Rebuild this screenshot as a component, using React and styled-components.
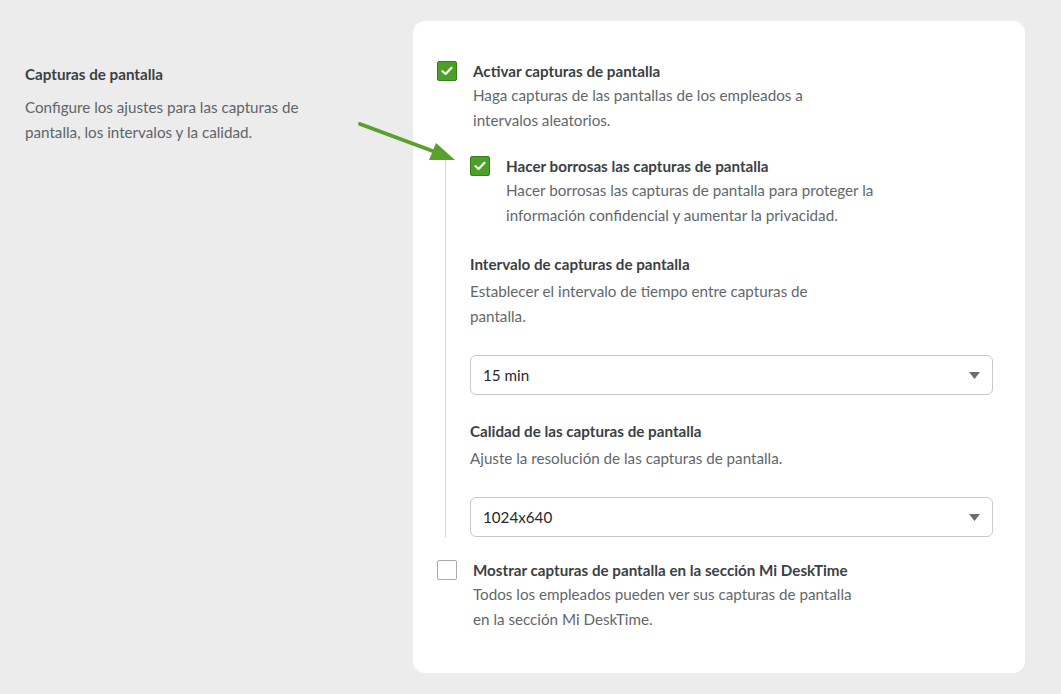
import React from "react";
import styled, { createGlobalStyle } from "styled-components";

const GlobalStyle = createGlobalStyle`
  html, body {
    margin: 0;
    padding: 0;
    background: #ebeceb;
  }
  body {
    font-family: Lato, "Noto Sans", sans-serif;
    -webkit-font-smoothing: antialiased;
  }
`;

const CheckIcon = () => (
  <svg width="12" height="10" viewBox="0 0 12 10">
    <path
      d="M1.5 5.2 L4.6 8 L10.5 1.8"
      fill="none"
      stroke="#fff"
      strokeWidth="2.2"
      strokeLinecap="round"
      strokeLinejoin="round"
    />
  </svg>
);

const Checkbox = ({ checked }) => (
  <Box checked={checked}>{checked && <CheckIcon />}</Box>
);

const CaretIcon = () => (
  <svg width="11" height="7" viewBox="0 0 11 7">
    <path d="M0 0 H11 L5.5 7 Z" fill="#6b6e70" />
  </svg>
);

const Select = ({ value }) => (
  <SelectBox>
    <span>{value}</span>
    <CaretIcon />
  </SelectBox>
);

const Option = ({ checked, title, children }) => (
  <OptionRow>
    <Checkbox checked={checked} />
    <OptionText>
      <Title>{title}</Title>
      <Desc>{children}</Desc>
    </OptionText>
  </OptionRow>
);

export default function App() {
  return (
    <>
      <GlobalStyle />
      <Page>
        <Side>
          <SideTitle>Capturas de pantalla</SideTitle>
          <SideDesc>
            Configure los ajustes para las capturas de
            <br />
            pantalla, los intervalos y la calidad.
          </SideDesc>
        </Side>
        <Card>
          <Option checked title="Activar capturas de pantalla">
            Haga capturas de las pantallas de los empleados a
            <br />
            intervalos aleatorios.
          </Option>
          <Nested>
            <Option checked title="Hacer borrosas las capturas de pantalla">
              Hacer borrosas las capturas de pantalla para proteger la
              <br />
              información confidencial y aumentar la privacidad.
            </Option>
            <Field>
              <Title>Intervalo de capturas de pantalla</Title>
              <FieldDesc>
                Establecer el intervalo de tiempo entre capturas de
                <br />
                pantalla.
              </FieldDesc>
              <Select value="15 min" />
            </Field>
            <Field>
              <Title>Calidad de las capturas de pantalla</Title>
              <FieldDesc>Ajuste la resolución de las capturas de pantalla.</FieldDesc>
              <Select value="1024x640" />
            </Field>
          </Nested>
          <Option title="Mostrar capturas de pantalla en la sección Mi DeskTime">
            Todos los empleados pueden ver sus capturas de pantalla
            <br />
            en la sección Mi DeskTime.
          </Option>
        </Card>
        <Pointer width="120" height="60" viewBox="350 115 120 60">
          <line
            x1="360"
            y1="124"
            x2="438"
            y2="153"
            stroke="#5aa02c"
            strokeWidth="4"
            strokeLinecap="round"
          />
          <polygon points="455,160 429,160 436,143" fill="#5aa02c" />
        </Pointer>
      </Page>
    </>
  );
}

const Page = styled.div`
  position: relative;
  display: flex;
  padding: 21px 0 21px 25px;
  width: 1061px;
  min-height: 694px;
  box-sizing: border-box;
`;

const Side = styled.div`
  width: 388px;
  padding-top: 42px;
  flex-shrink: 0;
`;

const SideTitle = styled.div`
  font-size: 15.2px;
  font-weight: 700;
  line-height: 22px;
  color: #3b3f44;
`;

const SideDesc = styled.div`
  margin-top: 10px;
  font-size: 15.2px;
  line-height: 25px;
  color: #5f6468;
`;

const Card = styled.div`
  width: 612px;
  background: #fff;
  border-radius: 12px;
  padding: 39px 32px 40px 24px;
  box-sizing: border-box;
  display: flex;
  flex-direction: column;
  gap: 22px;
`;

const OptionRow = styled.div`
  display: flex;
  gap: 16px;
`;

const OptionText = styled.div`
  display: flex;
  flex-direction: column;
`;

const Box = styled.div`
  width: 20px;
  height: 20px;
  box-sizing: border-box;
  flex-shrink: 0;
  margin-top: 1px;
  border-radius: 2px;
  display: flex;
  align-items: center;
  justify-content: center;
  background: ${(p) => (p.checked ? "#4c9f27" : "#fff")};
  border: 1px solid ${(p) => (p.checked ? "#3b7d1c" : "#a9adb0")};
`;

const Title = styled.div`
  font-size: 15.2px;
  font-weight: 700;
  line-height: 22px;
  color: #3b3f44;
`;

const Desc = styled.div`
  margin-top: 1px;
  font-size: 15.2px;
  line-height: 25px;
  color: #62676b;
`;

const FieldDesc = styled(Desc)`
  margin-top: 4px;
`;

const Nested = styled.div`
  margin-left: 8px;
  border-left: 1px solid #cfd1d3;
  padding-left: 24px;
  display: flex;
  flex-direction: column;
  gap: 25px;
`;

const Field = styled.div`
  display: flex;
  flex-direction: column;
`;

const SelectBox = styled.div`
  margin-top: 26px;
  height: 40px;
  box-sizing: border-box;
  border: 1px solid #c6c8ca;
  border-radius: 6px;
  padding: 0 12px;
  display: flex;
  align-items: center;
  justify-content: space-between;
  font-size: 15.2px;
  color: #25282b;
`;

const Pointer = styled.svg`
  position: absolute;
  left: 350px;
  top: 115px;
  overflow: visible;
`;
